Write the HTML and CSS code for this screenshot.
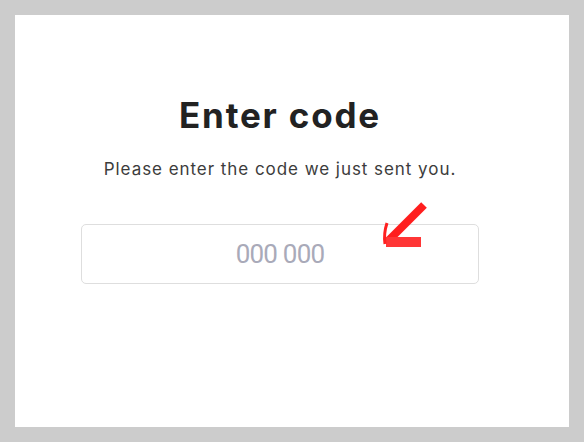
FILE: index.html
```html
<!DOCTYPE html>
<html lang="en">
<head>
<meta charset="utf-8">
<title>Enter code</title>
<link rel="stylesheet" href="styles.css">
</head>
<body>
  <main class="panel">
    <section class="content">
      <h1 class="title">Enter code</h1>
      <p class="subtitle">Please enter the code we just sent you.</p>
      <div class="field">
        <input class="code-input" type="text" placeholder="000 000" inputmode="numeric">
        <svg class="arrow" width="60" height="60" viewBox="0 0 60 60" aria-hidden="true">
          <path d="M44 8 L8 44" stroke="#ff1e1e" stroke-width="8" stroke-linecap="butt" fill="none"/>
          <path d="M6 45 L41 45" stroke="#ff3636" stroke-width="10" stroke-linecap="butt" fill="none"/>
          <path d="M7 26 C5 32 4 40 5 47" stroke="#ff2020" stroke-width="3" fill="none"/>
        </svg>
      </div>
    </section>
  </main>
</body>
</html>
```

FILE: styles.css
```css
html, body {
  margin: 0;
  padding: 0;
}

body {
  background: #cccccc;
  padding: 15px;
  font-family: Inter, "Noto Sans", sans-serif;
}

.panel {
  background: #ffffff;
  height: 412px;
  box-sizing: border-box;
  padding-top: 80px;
  padding-right: 24px;
}

.content {
  display: flex;
  flex-direction: column;
  align-items: center;
}

.title {
  margin: 0;
  font-size: 35px;
  line-height: 40px;
  font-weight: 700;
  letter-spacing: 1.8px;
  color: #222222;
}

.subtitle {
  margin: 22px 0 0;
  font-size: 17px;
  line-height: 24px;
  letter-spacing: 0.95px;
  color: #3c3c3c;
}

.field {
  position: relative;
  margin-top: 43px;
}

.code-input {
  box-sizing: border-box;
  display: block;
  width: 398px;
  height: 60px;
  border: 1px solid #dedede;
  border-radius: 5px;
  font-family: Roboto, Inter, sans-serif;
  font-size: 26px;
  letter-spacing: -0.8px;
  text-align: center;
  color: #222;
  outline: none;
  padding: 0;
}

.code-input::placeholder {
  color: #a9aab9;
}

.arrow {
  position: absolute;
  left: 299px;
  top: -27px;
}
```
